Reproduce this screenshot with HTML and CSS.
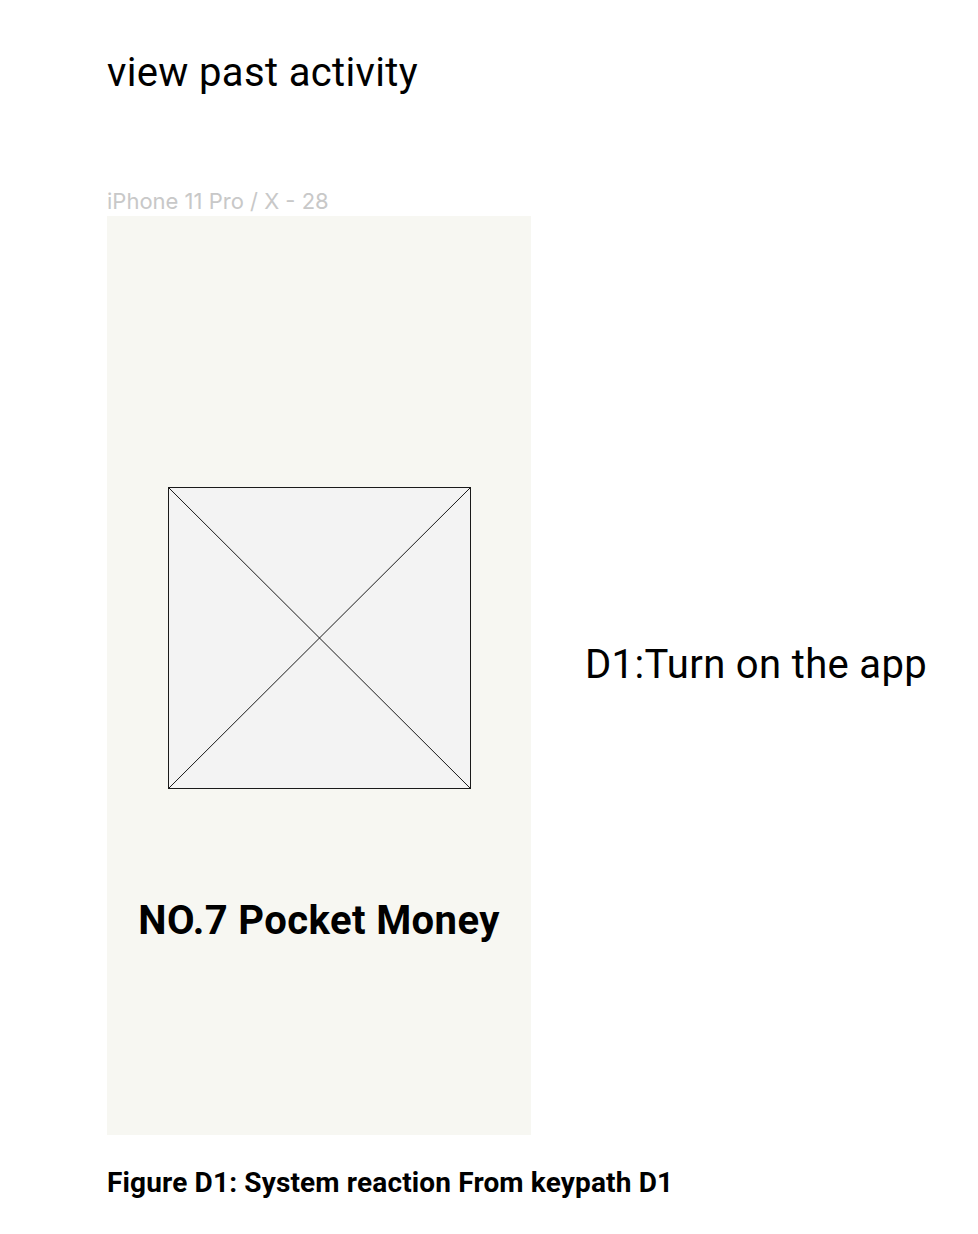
FILE: index.html
```html
<!DOCTYPE html>
<html>
<head>
<meta charset="utf-8">
<link rel="stylesheet" href="styles.css">
</head>
<body>
<div class="page">
  <h1 class="title">view past activity</h1>
  <div class="row">
    <div class="device">
      <div class="device-label">iPhone 11 Pro / X - 28</div>
      <div class="frame">
        <svg class="placeholder" width="303" height="302" viewBox="0 0 303 302">
          <rect x="0.5" y="0.5" width="302" height="301" fill="#f3f3f3" stroke="#1a1a1a" stroke-width="1"/>
          <line x1="0.5" y1="0.5" x2="302.5" y2="301.5" stroke="#1a1a1a" stroke-width="1"/>
          <line x1="302.5" y1="0.5" x2="0.5" y2="301.5" stroke="#1a1a1a" stroke-width="1"/>
        </svg>
        <div class="app-name">NO.7 Pocket Money</div>
      </div>
    </div>
    <div class="step">D1:Turn on the app</div>
  </div>
  <div class="caption">Figure D1: System reaction From keypath D1</div>
</div>
</body>
</html>
```
FILE: styles.css
```css
html, body {
  margin: 0;
  padding: 0;
  background: #ffffff;
}
body {
  font-family: Roboto, "Liberation Sans", sans-serif;
  color: #000;
}
.page {
  padding: 48px 0 0 107px;
}
.title {
  margin: 0;
  font-size: 40px;
  font-weight: 400;
  letter-spacing: 0.35px;
  line-height: 50px;
  height: 50px;
}
.row {
  display: flex;
  align-items: center;
  margin-top: 88px;
}
.device {
  display: flex;
  flex-direction: column;
  width: 424px;
}
.device-label {
  font-family: Inter, Roboto, sans-serif;
  font-size: 22px;
  line-height: 30px;
  color: #c8c8c8;
  height: 30px;
}
.frame {
  width: 424px;
  height: 919px;
  background: #f7f7f2;
  display: flex;
  flex-direction: column;
  align-items: center;
  padding-top: 271px;
  box-sizing: border-box;
}
.placeholder {
  display: block;
}
.app-name {
  margin-top: 107px;
  font-size: 40px;
  font-weight: 700;
  letter-spacing: 0.4px;
  line-height: 50px;
}
.step {
  margin-left: 54px;
  margin-top: 8px;
  font-size: 40px;
  letter-spacing: 0.35px;
  line-height: 50px;
}
.caption {
  margin-top: 30px;
  font-size: 28px;
  font-weight: 700;
  letter-spacing: 0.15px;
  line-height: 36px;
}
```
